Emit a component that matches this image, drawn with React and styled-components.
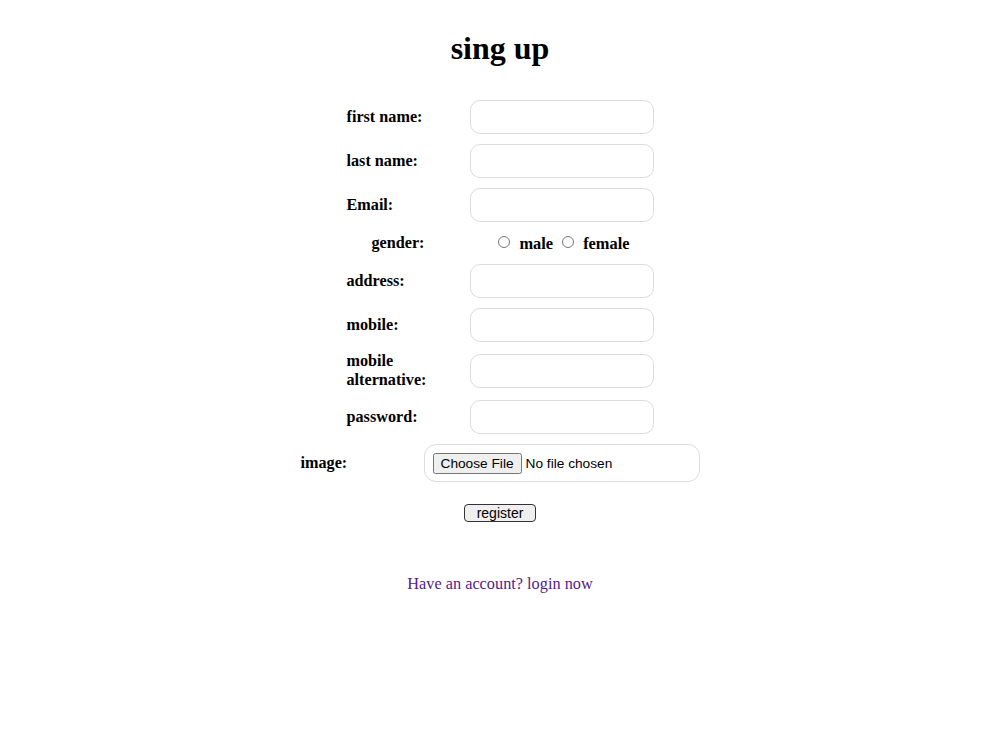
import React from "react";
import styled, { createGlobalStyle } from "styled-components";

const Global = createGlobalStyle`
    body {
        margin: 8px;
        font-family: "Liberation Serif", "Times New Roman", serif;
        background: #fff;
        color: #000;
    }
`;

const Page = styled.div`
    display: flex;
    flex-direction: column;
    align-items: center;
`;

const Title = styled.h1`
    font-size: 32px;
    margin: 22px 0 33px 0;
`;

const Form = styled.form`
    display: flex;
    flex-direction: column;
    align-items: center;
    gap: 10px;
`;

const Row = styled.div`
    display: grid;
    grid-template-columns: 123px ${(p) => p.$field || 184}px;
    align-items: center;
    min-height: ${(p) => p.$h || 34}px;
`;

const Label = styled.label`
    font-weight: bold;
    font-size: 16.2px;
    line-height: 19px;
    padding-right: 20px;
    text-align: ${(p) => (p.$center ? "center" : "left")};
`;

const Input = styled.input`
    box-sizing: border-box;
    width: 184px;
    height: 34px;
    border: 1px solid #dcdcdc;
    border-radius: 10px;
    outline: none;
`;

const Radios = styled.div`
    display: flex;
    justify-content: center;
    align-items: center;
    font-weight: bold;
    font-size: 16.4px;
    padding: 2px 0 0 14px;

    input {
        margin: 0 9px 5px 0;
        width: 12px;
        height: 12px;
    }
    span {
        margin-right: 9px;
    }
`;

const FileInput = styled.input`
    box-sizing: border-box;
    width: 276px;
    height: 38px;
    padding: 8px;
    border: 1px solid #dcdcdc;
    border-radius: 12px;
    font-family: "Liberation Sans", Arial, sans-serif;
    font-size: 13.7px;
`;

const Register = styled.button`
    margin-top: 12px;
    width: 72px;
    height: 18px;
    padding: 0;
    font-family: "Liberation Sans", Arial, sans-serif;
    font-size: 14px;
    line-height: 14px;
    background: #efefef;
    border: 1px solid #333;
    border-radius: 4px;
`;

const Footer = styled.a`
    margin-top: 52px;
    font-size: 16.3px;
    color: #551a8b;
    text-decoration: none;
`;

const fields = [
    ["first name:", "text"],
    ["last name:", "text"],
    ["Email:", "email"],
];

const more = [
    ["address:", "text"],
    ["mobile:", "tel"],
    ["mobile alternative:", "tel", 38],
    ["password:", "password"],
];

export default function App() {
    return (
        <Page>
            <Global />
            <Title>sing up</Title>
            <Form onSubmit={(e) => e.preventDefault()}>
                {fields.map(([label, type]) => (
                    <Row key={label}>
                        <Label>{label}</Label>
                        <Input type={type} />
                    </Row>
                ))}
                <Row $h={22}>
                    <Label $center>gender:</Label>
                    <Radios>
                        <input type="radio" name="gender" />
                        <span>male</span>
                        <input type="radio" name="gender" />
                        <span>female</span>
                    </Radios>
                </Row>
                {more.map(([label, type, h]) => (
                    <Row key={label} $h={h}>
                        <Label>{label}</Label>
                        <Input type={type} />
                    </Row>
                ))}
                <Row $field={276} $h={38}>
                    <Label>image:</Label>
                    <FileInput type="file" />
                </Row>
                <Register type="submit">register</Register>
            </Form>
            <Footer href="#">Have an account? login now</Footer>
        </Page>
    );
}
